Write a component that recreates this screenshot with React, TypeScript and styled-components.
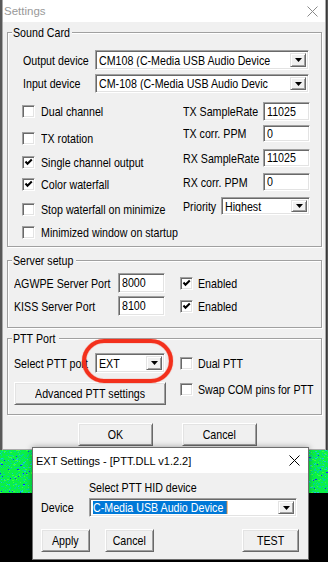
import { FC, ReactNode, useMemo } from 'react'
import styled, { createGlobalStyle } from 'styled-components'

const UI_FONT = `"Liberation Sans", Arial, sans-serif`

const GlobalStyle = createGlobalStyle`
  html, body {
    margin: 0;
    padding: 0;
    background: #000;
  }
  body {
    font-family: ${UI_FONT};
    font-size: 13px;
    color: #000;
  }
`

// the dialog font is a tall, narrow bitmap face: squeeze Liberation Sans to its width
const Txt = styled.span<{ $center?: boolean }>`
  display: inline-block;
  white-space: nowrap;
  line-height: 15px;
  transform: scaleX(0.82);
  transform-origin: ${p => (p.$center ? 'center' : 'left')} center;
`

// ---------- desktop behind the windows ----------

const Desktop = styled.div`
  position: relative;
  width: 328px;
  height: 562px;
  overflow: hidden;
  display: flex;
  flex-direction: column;
  background: #000;
`
const BackStrip = styled.div`
  flex: none;
  height: 450px;
  background: #585858;
`
const WaterfallSvg = styled.svg`
  display: block;
  flex: none;
`

const Waterfall: FC = () => {
  const dots = useMemo(() => {
    let seed = 1234567
    const rnd = () => {
      seed = (seed * 1103515245 + 12345) & 0x7fffffff
      return seed / 0x7fffffff
    }
    const out: { x: number; y: number; w: number; c: string }[] = []
    for (let i = 0; i < 3200; i++) {
      const r = rnd()
      const c = r < 0.55 ? '#00d89a' : r < 0.8 ? '#3cff3c' : r < 0.93 ? '#18c8d8' : '#1028ff'
      out.push({ x: Math.floor(rnd() * 328), y: Math.floor(rnd() * 43), w: rnd() < 0.3 ? 2 : 1, c })
    }
    return out
  }, [])
  return (
    <WaterfallSvg width={328} height={43} viewBox="0 0 328 43" shapeRendering="crispEdges">
      <rect width="328" height="43" fill="#0af046" />
      {dots.map((d, i) => (
        <rect key={i} x={d.x} y={d.y} width={d.w} height={1} fill={d.c} />
      ))}
    </WaterfallSvg>
  )
}

// ---------- window chrome ----------

const SettingsWindow = styled.div`
  position: absolute;
  left: 2px;
  top: 0;
  width: 324px;
  height: 450px;
  box-sizing: border-box;
  display: flex;
  flex-direction: column;
  background: #f0f0f0;
  border: 1px solid #a9a9a9;
  border-top: none;
  box-shadow: 1px 0 0 #3a3a3a;
`
const ExtWindow = styled.div`
  position: absolute;
  left: 32px;
  top: 447px;
  width: 277px;
  height: 113px;
  box-sizing: border-box;
  display: flex;
  flex-direction: column;
  background: #f0f0f0;
  border: 1px solid #6e6e6e;
  box-shadow: 0 0 6px rgba(0, 0, 0, 0.35);
`
const TitleBar = styled.div<{ $h: number; $active?: boolean }>`
  flex: none;
  height: ${p => p.$h}px;
  display: flex;
  align-items: center;
  padding-left: ${p => (p.$active ? 3 : 1)}px;
  background: #fff;
  font-size: ${p => (p.$active ? 11 : 11.5)}px;
  color: ${p => (p.$active ? '#000' : '#999')};
`
const TitleText = styled.span`
  flex: 1;
  white-space: nowrap;
`
const CloseIcon = styled.svg<{ $mr: number }>`
  flex: none;
  margin-right: ${p => p.$mr}px;
`

const Close: FC<{ color: string; mr: number }> = ({ color, mr }) => (
  <CloseIcon $mr={mr} width="11" height="11" viewBox="0 0 11 11">
    <path d="M0.5 0.5 L10.5 10.5 M10.5 0.5 L0.5 10.5" stroke={color} strokeWidth="1" />
  </CloseIcon>
)

const SettingsBody = styled.div`
  flex: 1;
  display: flex;
  flex-direction: column;
  padding: 3px 3px 0 4px;
`

// ---------- group boxes ----------

const Group = styled.fieldset<{ $mt: number }>`
  margin: ${p => p.$mt}px 0 0;
  padding: 0;
  min-width: 0;
  border: 1px solid #a0a0a0;
  box-shadow: inset 1px 1px 0 #fff, 1px 1px 0 #fff;
`
const Legend = styled.legend<{ $w: number }>`
  width: ${p => p.$w}px;
  margin-left: 4px;
  padding: 0 1px;
  line-height: 14px;
  background: #f0f0f0;
  overflow: visible;
`
const GroupBody = styled.div<{ $pt: number; $pb: number; $pl: number }>`
  padding: ${p => p.$pt}px 0 ${p => p.$pb}px ${p => p.$pl}px;
`

// ---------- controls ----------

const sunken = `
  box-sizing: border-box;
  background: #fff;
  border: 1px solid;
  border-color: #a0a0a0 #fff #fff #a0a0a0;
  box-shadow: inset 1px 1px 0 #696969, inset -1px -1px 0 #e3e3e3;
`

const Row = styled.div<{ $h: number; $mt?: number }>`
  display: flex;
  align-items: center;
  height: ${p => p.$h}px;
  margin-top: ${p => p.$mt ?? 0}px;
`
const LabelBox = styled.span<{ $w: number; $pl?: number }>`
  flex: none;
  display: flex;
  align-items: center;
  width: ${p => p.$w}px;
  padding-left: ${p => p.$pl ?? 0}px;
  box-sizing: border-box;
`

const Label: FC<{ w: number; pl?: number; children?: ReactNode }> = ({ w, pl, children }) => (
  <LabelBox $w={w} $pl={pl}>
    {children && <Txt>{children}</Txt>}
  </LabelBox>
)

const Field = styled.div<{ $w: number; $h: number }>`
  ${sunken}
  flex: none;
  display: flex;
  align-items: center;
  width: ${p => p.$w}px;
  height: ${p => p.$h}px;
  padding: 0 0 1px 3px;
  overflow: hidden;
`
const ComboBox = styled.div<{ $w: number; $h: number }>`
  ${sunken}
  flex: none;
  display: flex;
  align-items: stretch;
  width: ${p => p.$w}px;
  height: ${p => p.$h}px;
  padding: 2px 2px 2px 3px;
`
const ComboText = styled.span`
  flex: 1;
  min-width: 0;
  display: flex;
  align-items: center;
  overflow: hidden;
`
const Selected = styled(Txt)`
  background: #0078d7;
  color: #fff;
  padding-right: 4px;
  box-shadow: 1px 0 0 #e8821e;
`
const DropButton = styled.span`
  flex: none;
  width: 16px;
  display: flex;
  align-items: center;
  justify-content: center;
  box-sizing: border-box;
  background: #f0f0f0;
  border: 1px solid;
  border-color: #e3e3e3 #696969 #696969 #e3e3e3;
  box-shadow: inset 1px 1px 0 #fff, inset -1px -1px 0 #a0a0a0;
`

const Combo: FC<{ w: number; h: number; children: ReactNode }> = ({ w, h, children }) => (
  <ComboBox $w={w} $h={h}>
    <ComboText>{typeof children === 'string' ? <Txt>{children}</Txt> : children}</ComboText>
    <DropButton>
      <svg width="7" height="4" viewBox="0 0 7 4">
        <path d="M0 0 H7 L3.5 4 Z" fill="#000" />
      </svg>
    </DropButton>
  </ComboBox>
)

const CheckWrap = styled.div<{ $gap: number; $mt?: number }>`
  display: flex;
  align-items: center;
  gap: ${p => p.$gap}px;
  height: 13px;
  margin-top: ${p => p.$mt ?? 0}px;
`
const Box = styled.span`
  ${sunken}
  flex: none;
  width: 13px;
  height: 13px;
  display: flex;
  align-items: center;
  justify-content: center;
`

const Check: FC<{ label: string; checked?: boolean; gap?: number; mt?: number }> = ({ label, checked, gap = 6, mt }) => (
  <CheckWrap $gap={gap} $mt={mt}>
    <Box>
      {checked && (
        <svg width="9" height="9" viewBox="0 0 9 9">
          <path d="M1.5 3.5 L3.5 5.8 L7.8 1.5" stroke="#000" strokeWidth="2" fill="none" />
        </svg>
      )}
    </Box>
    <Txt>{label}</Txt>
  </CheckWrap>
)

const ButtonBox = styled.button<{ $w: number }>`
  flex: none;
  display: flex;
  align-items: center;
  justify-content: center;
  width: ${p => p.$w}px;
  height: 23px;
  padding: 0;
  font-family: ${UI_FONT};
  font-size: 13px;
  color: #000;
  background: #f0f0f0;
  border: 1px solid;
  border-color: #fff #696969 #696969 #fff;
  box-shadow: inset 1px 1px 0 #e3e3e3, inset -1px -1px 0 #a0a0a0;
  overflow: visible;
`

const Button: FC<{ w: number; children: string }> = ({ w, children }) => (
  <ButtonBox $w={w}>
    <Txt $center>{children}</Txt>
  </ButtonBox>
)

// ---------- layout pieces ----------

const Options = styled.div`
  display: flex;
`
const LeftCol = styled.div`
  flex: none;
  width: 161px;
  display: flex;
  flex-direction: column;
`
const RightCol = styled.div`
  display: flex;
  flex-direction: column;
`
const PttGrid = styled.div`
  display: grid;
  grid-template-columns: 81px 70px 15px auto;
  grid-template-rows: 20px 23px;
  row-gap: 9px;
  align-items: center;
`
const WideCell = styled.div`
  grid-column: 1 / 3;
  display: flex;
`
const ComboAnchor = styled.div`
  position: relative;
  display: flex;
`
const Annotation = styled.div`
  position: absolute;
  left: -13px;
  right: -8px;
  top: -14px;
  bottom: -10px;
  border: 4px solid #f3301c;
  border-radius: 24px;
  box-shadow: 0 0 1px #f3301c, inset 0 0 1px #f3301c;
  pointer-events: none;
`
const DialogButtons = styled.div`
  display: flex;
  gap: 29px;
  margin-top: 8px;
  padding-left: 71px;
`
const ExtBody = styled.div`
  flex: 1;
  display: flex;
  flex-direction: column;
  padding: 7px 9px 0 8px;
`
const Caption = styled.div`
  margin-left: 48px;
  height: 15px;
`
const ExtButtons = styled.div`
  display: flex;
  gap: 15px;
  margin-top: 12px;
`
const Spacer = styled.span`
  flex: 1;
`

export default function App() {
  return (
    <>
      <GlobalStyle />
      <Desktop>
        <BackStrip />
        <Waterfall />

        <SettingsWindow>
          <TitleBar $h={22}>
            <TitleText>Settings</TitleText>
            <Close color="#8a8a8a" mr={7} />
          </TitleBar>
          <SettingsBody>
            <Group $mt={0}>
              <Legend $w={58}><Txt>Sound Card</Txt></Legend>
              <GroupBody $pt={10} $pb={7} $pl={14}>
                <Row $h={20}>
                  <Label w={73} pl={1}>Output device</Label>
                  <Combo w={214} h={20}>CM108 (C-Media USB Audio Device</Combo>
                </Row>
                <Row $h={19} $mt={4}>
                  <Label w={73} pl={1}>Input device</Label>
                  <Combo w={214} h={19}>CM-108 (C-Media USB Audio Devic</Combo>
                </Row>
                <Options>
                  <LeftCol>
                    <Check label="Dual channel" mt={12} />
                    <Check label="TX rotation" mt={14} />
                    <Check label="Single channel output" checked mt={11} />
                    <Check label="Color waterfall" checked mt={9} />
                    <Check label="Stop waterfall on minimize" mt={12} />
                    <Check label="Minimized window on startup" mt={10} />
                  </LeftCol>
                  <RightCol>
                    <Row $h={19} $mt={9}>
                      <Label w={80}>TX SampleRate</Label>
                      <Field $w={47} $h={19}><Txt>11025</Txt></Field>
                    </Row>
                    <Row $h={17} $mt={4}>
                      <Label w={80}>TX corr. PPM</Label>
                      <Field $w={47} $h={17}><Txt>0</Txt></Field>
                    </Row>
                    <Row $h={18} $mt={7}>
                      <Label w={80}>RX SampleRate</Label>
                      <Field $w={47} $h={18}><Txt>11025</Txt></Field>
                    </Row>
                    <Row $h={18} $mt={6}>
                      <Label w={80}>RX corr. PPM</Label>
                      <Field $w={47} $h={18}><Txt>0</Txt></Field>
                    </Row>
                    <Row $h={18} $mt={6}>
                      <Label w={38}>Priority</Label>
                      <Combo w={89} h={18}>Highest</Combo>
                    </Row>
                  </RightCol>
                </Options>
              </GroupBody>
            </Group>

            <Group $mt={6}>
              <Legend $w={62}><Txt>Server setup</Txt></Legend>
              <GroupBody $pt={5} $pb={11} $pl={6}>
                <Row $h={20}>
                  <Label w={104}>AGWPE Server Port</Label>
                  <Field $w={47} $h={20}><Txt>8000</Txt></Field>
                  <Label w={15} />
                  <Check label="Enabled" checked gap={5} />
                </Row>
                <Row $h={20} $mt={3}>
                  <Label w={104}>KISS Server Port</Label>
                  <Field $w={47} $h={20}><Txt>8100</Txt></Field>
                  <Label w={15} />
                  <Check label="Enabled" checked gap={5} />
                </Row>
              </GroupBody>
            </Group>

            <Group $mt={3}>
              <Legend $w={45}><Txt>PTT Port</Txt></Legend>
              <GroupBody $pt={7} $pb={9} $pl={6}>
                <PttGrid>
                  <Label w={81}>Select PTT port</Label>
                  <ComboAnchor>
                    <Combo w={70} h={20}>EXT</Combo>
                    <Annotation />
                  </ComboAnchor>
                  <span />
                  <Check label="Dual PTT" gap={5} />
                  <WideCell>
                    <Button w={152}>Advanced PTT settings</Button>
                  </WideCell>
                  <span />
                  <Check label="Swap COM pins for PTT" gap={5} mt={-8} />
                </PttGrid>
              </GroupBody>
            </Group>

            <DialogButtons>
              <Button w={75}>OK</Button>
              <Button w={75}>Cancel</Button>
            </DialogButtons>
          </SettingsBody>
        </SettingsWindow>

        <ExtWindow>
          <TitleBar $h={25} $active>
            <TitleText>EXT Settings - [PTT.DLL v1.2.2]</TitleText>
            <Close color="#000" mr={8} />
          </TitleBar>
          <ExtBody>
            <Caption><Txt>Select PTT HID device</Txt></Caption>
            <Row $h={19} $mt={3}>
              <Label w={48}>Device</Label>
              <Combo w={208} h={19}>
                <Selected>C-Media USB Audio Device</Selected>
              </Combo>
            </Row>
            <ExtButtons>
              <Button w={49}>Apply</Button>
              <Button w={49}>Cancel</Button>
              <Spacer />
              <Button w={57}>TEST</Button>
            </ExtButtons>
          </ExtBody>
        </ExtWindow>
      </Desktop>
    </>
  )
}
